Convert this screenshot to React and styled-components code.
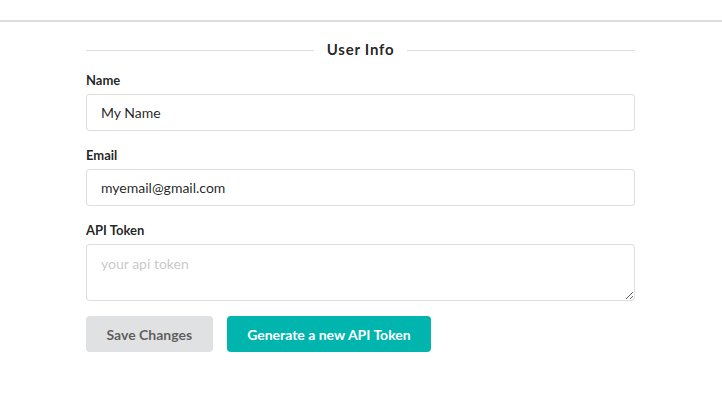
import styled, { createGlobalStyle } from "styled-components";

const GlobalStyle = createGlobalStyle`
  html, body {
    margin: 0;
    padding: 0;
    background: #fff;
  }
  body {
    font-family: Lato, "Helvetica Neue", Arial, sans-serif;
    font-size: 14px;
    color: rgba(0, 0, 0, 0.87);
  }
`;

const App = () => {
  return (
    <Page>
      <GlobalStyle />
      <TopBar />
      <Form onSubmit={(e) => e.preventDefault()}>
        <Divider>
          <span>User Info</span>
        </Divider>
        <Field>
          <Label>Name</Label>
          <Input type="text" defaultValue="My Name" />
        </Field>
        <Field>
          <Label>Email</Label>
          <Input type="text" defaultValue="myemail@gmail.com" />
        </Field>
        <Field>
          <Label>API Token</Label>
          <TextArea placeholder="your api token" />
        </Field>
        <Actions>
          <Button type="button">Save Changes</Button>
          <Button type="button" primary>
            Generate a new API Token
          </Button>
        </Actions>
      </Form>
    </Page>
  );
};

const Page = styled.div`
  min-height: 405px;
`;
const TopBar = styled.div`
  height: 20px;
  border-bottom: 2px solid #dcdcdc;
`;
const Form = styled.form`
  width: 549px;
  margin: 0 0 0 86px;
  padding-top: 17px;
`;
const Divider = styled.div`
  display: flex;
  align-items: center;
  height: 20px;
  margin-bottom: 11px;
  font-size: 15px;
  font-weight: 700;
  letter-spacing: 0.05em;
  color: rgba(0, 0, 0, 0.87);
  &::before,
  &::after {
    content: "";
    flex: 1;
    border-top: 1px solid rgba(34, 36, 38, 0.15);
    margin-top: 2px;
  }
  span {
    padding: 0 13px;
  }
`;
const Field = styled.div`
  margin-bottom: 14px;
`;
const Label = styled.label`
  display: block;
  font-size: 13px;
  font-weight: 700;
  line-height: 20px;
  margin-bottom: 4px;
  color: rgba(0, 0, 0, 0.87);
`;
const Input = styled.input`
  display: block;
  box-sizing: border-box;
  width: 100%;
  height: 37px;
  padding: 0 14px;
  font-family: Lato, "Helvetica Neue", Arial, sans-serif;
  font-size: 14px;
  color: rgba(0, 0, 0, 0.87);
  border: 1px solid rgba(34, 36, 38, 0.15);
  border-radius: 4px;
  outline: none;
`;
const TextArea = styled.textarea`
  display: block;
  box-sizing: border-box;
  width: 100%;
  height: 57px;
  padding: 10px 14px;
  margin: 0;
  font-family: Lato, "Helvetica Neue", Arial, sans-serif;
  font-size: 14px;
  line-height: 17px;
  color: rgba(0, 0, 0, 0.87);
  border: 1px solid rgba(34, 36, 38, 0.15);
  border-radius: 4px;
  outline: none;
  &::placeholder {
    color: rgba(191, 191, 191, 0.87);
  }
`;
const Actions = styled.div`
  display: flex;
  gap: 14px;
  padding-top: 1px;
`;
const Button = styled.button`
  height: 36px;
  padding: 0 20.5px;
  border: none;
  border-radius: 4px;
  font-family: Lato, "Helvetica Neue", Arial, sans-serif;
  font-size: 14px;
  font-weight: 700;
  cursor: pointer;
  background: ${(p) => (p.primary ? "#00b5ad" : "#e0e1e2")};
  color: ${(p) => (p.primary ? "#fff" : "rgba(0, 0, 0, 0.6)")};
`;

export default App;
